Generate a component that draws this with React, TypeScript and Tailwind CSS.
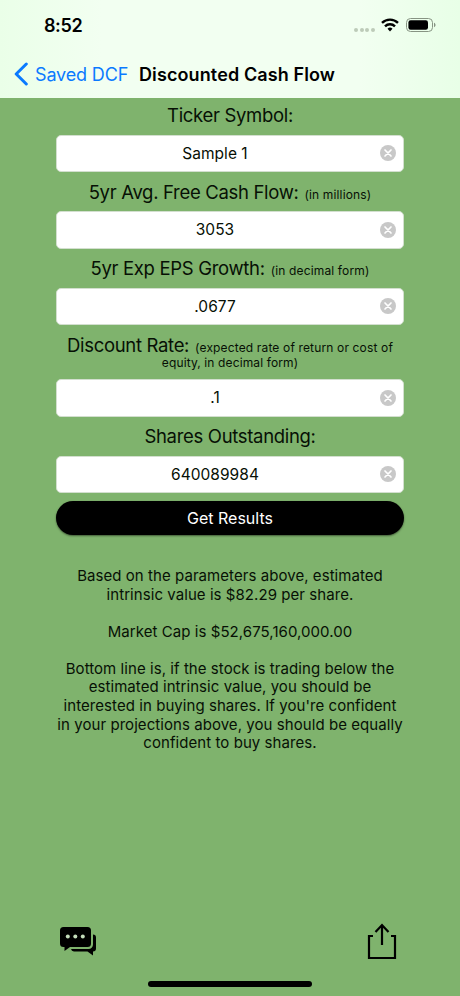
import type { ReactNode } from "react"

type FieldProps = {
  label: string
  hint?: ReactNode
  hintBelow?: string
  value: string
  labelClass?: string
}

function StatusBar() {
  return (
    <div className="flex h-[50px] items-center justify-between pl-[44px] pr-[24px]">
      <span className="pt-[2px] text-[18px] font-semibold leading-none tracking-[-0.4px]">8:52</span>
      <div className="flex items-center">
        <div className="mr-[6px] mt-[9px] flex gap-[1.6px]">
          {[0, 1, 2, 3].map((i) => (
            <span key={i} className="size-[4px] rounded-full bg-[#bdcbb9]" />
          ))}
        </div>
        <svg width="18" height="14" viewBox="0 0 18 14" fill="none" stroke="#000" strokeWidth="2.4">
          <path d="M1 4.9a11.4 11.4 0 0 1 16 0" />
          <path d="M4 8.3a7.1 7.1 0 0 1 10 0" />
          <path d="M9 13.4 6.5 10.8a3.5 3.5 0 0 1 5 0z" fill="#000" stroke="none" />
        </svg>
        <svg className="ml-[7px]" width="30" height="14" viewBox="0 0 30 14">
          <rect x="0.5" y="0.5" width="26" height="13" rx="4" fill="none" stroke="#879483" />
          <rect x="2.4" y="2.3" width="19.6" height="9.4" rx="2.2" />
          <path d="M28 4.8c2 .7 2 3.7 0 4.4z" fill="#879483" />
        </svg>
      </div>
    </div>
  )
}

function Field({ label, hint, hintBelow, value, labelClass = "h-[39px] pt-[9.5px]" }: FieldProps) {
  return (
    <div>
      <div className={labelClass}>
        <div className="flex h-[20px] items-baseline justify-center gap-[6px] leading-[20px]">
          <span className="text-[18.5px] tracking-[-0.32px]">{label}</span>
          {hint && <span className="text-[12px] tracking-[0.15px]">{hint}</span>}
        </div>
        {hintBelow && (
          <div className="text-center text-[12px] leading-[16px] tracking-[0.12px]">{hintBelow}</div>
        )}
      </div>
      <div className="flex h-[37.5px] items-center rounded-[5px] border border-[#d3dfcf] bg-white px-[7px]">
        <span className="flex-1 pr-[14px] text-center text-[15.5px] leading-none tracking-[0.03px]">{value}</span>
        <svg width="16" height="16" viewBox="0 0 16 16">
          <circle cx="8" cy="8" r="8" fill="#c8c8c8" />
          <path d="m5 5 6 6m0-6-6 6" stroke="#fff" strokeWidth="1.7" strokeLinecap="round" />
        </svg>
      </div>
    </div>
  )
}

export default function App() {
  return (
    <div className="flex h-[996px] w-[460px] flex-col overflow-hidden whitespace-nowrap bg-[#7fb36d] font-['Inter',sans-serif] text-black">
      <header className="h-[98px] bg-[linear-gradient(90deg,#eaffe8_0%,#f2fff1_22%,#f2fff1_78%,#e8ffe7_100%)]">
        <StatusBar />
        <div className="flex h-[48px] items-center pl-[14px]">
          <svg width="15" height="24" viewBox="0 0 15 24" fill="none" stroke="#0a7aff" strokeWidth="3" strokeLinecap="round" strokeLinejoin="round">
            <path d="M12.3 2 2.2 12l10.1 10" />
          </svg>
          <span className="ml-[6px] w-[104px] text-[18px] tracking-[-0.15px] text-[#0a7aff]">Saved DCF</span>
          <h1 className="text-[18px] font-semibold tracking-[0.11px]">Discounted Cash Flow</h1>
        </div>
      </header>

      <main className="px-[56px] text-[#071005]">
        <Field label="Ticker Symbol:" value="Sample 1" labelClass="h-[36.5px] pt-[7px]" />
        <Field label="5yr Avg. Free Cash Flow:" hint="(in millions)" value="3053" />
        <Field label="5yr Exp EPS Growth:" hint="(in decimal form)" value=".0677" />
        <Field
          label="Discount Rate:"
          hint="(expected rate of return or cost of"
          hintBelow="equity, in decimal form)"
          value=".1"
          labelClass="h-[54px] pt-[9.5px]"
        />
        <Field label="Shares Outstanding:" value="640089984" />
        <button className="mt-[8px] flex h-[34px] w-full items-center justify-center rounded-full bg-black text-[16px] text-white shadow-[0_1px_2px_rgba(0,0,0,0.5)]">
          Get Results
        </button>

        <div className="mt-[32px] flex flex-col items-center gap-[18.5px] text-center text-[15px] leading-[18.6px] tracking-[0.06px]">
          <p>
            Based on the parameters above, estimated
            <br />
            intrinsic value is $82.29 per share.
          </p>
          <p>Market Cap is $52,675,160,000.00</p>
          <p>
            Bottom line is, if the stock is trading below the
            <br />
            estimated intrinsic value, you should be
            <br />
            interested in buying shares. If you're confident
            <br />
            in your projections above, you should be equally
            <br />
            confident to buy shares.
          </p>
        </div>
      </main>

      <footer className="mt-auto">
        <div className="flex items-center justify-between pl-[60px] pr-[63px]">
          <svg width="37" height="30" viewBox="0 0 37 30">
            <path d="M33 8.5a3 3 0 0 1 3 3v11a3 3 0 0 1-3 3v4l-5.5-4H14a3 3 0 0 1-3-2.4h17.5a4.5 4.5 0 0 0 4.5-4.5z" />
            <path d="M3.5 1h24a3.5 3.5 0 0 1 3.5 3.5v13a3.5 3.5 0 0 1-3.5 3.5H10l-5.5 4v-4h-1A3.5 3.5 0 0 1 0 17.5v-13A3.5 3.5 0 0 1 3.5 1z" />
            <g fill="#c4dcbb">
              <circle cx="7.8" cy="10.5" r="2" />
              <circle cx="15.3" cy="10.5" r="2" />
              <circle cx="22.8" cy="10.5" r="2" />
            </g>
          </svg>
          <svg width="30" height="38" viewBox="0 0 30 38" fill="none" stroke="#000" strokeWidth="2.2">
            <path d="M6 14H2v22h26V14h-4M15 23V3M8.5 10 15 3l6.5 7" />
          </svg>
        </div>
        <div className="mx-auto mb-[9px] mt-[21px] h-[6px] w-[164px] rounded-full bg-black" />
      </footer>
    </div>
  )
}
